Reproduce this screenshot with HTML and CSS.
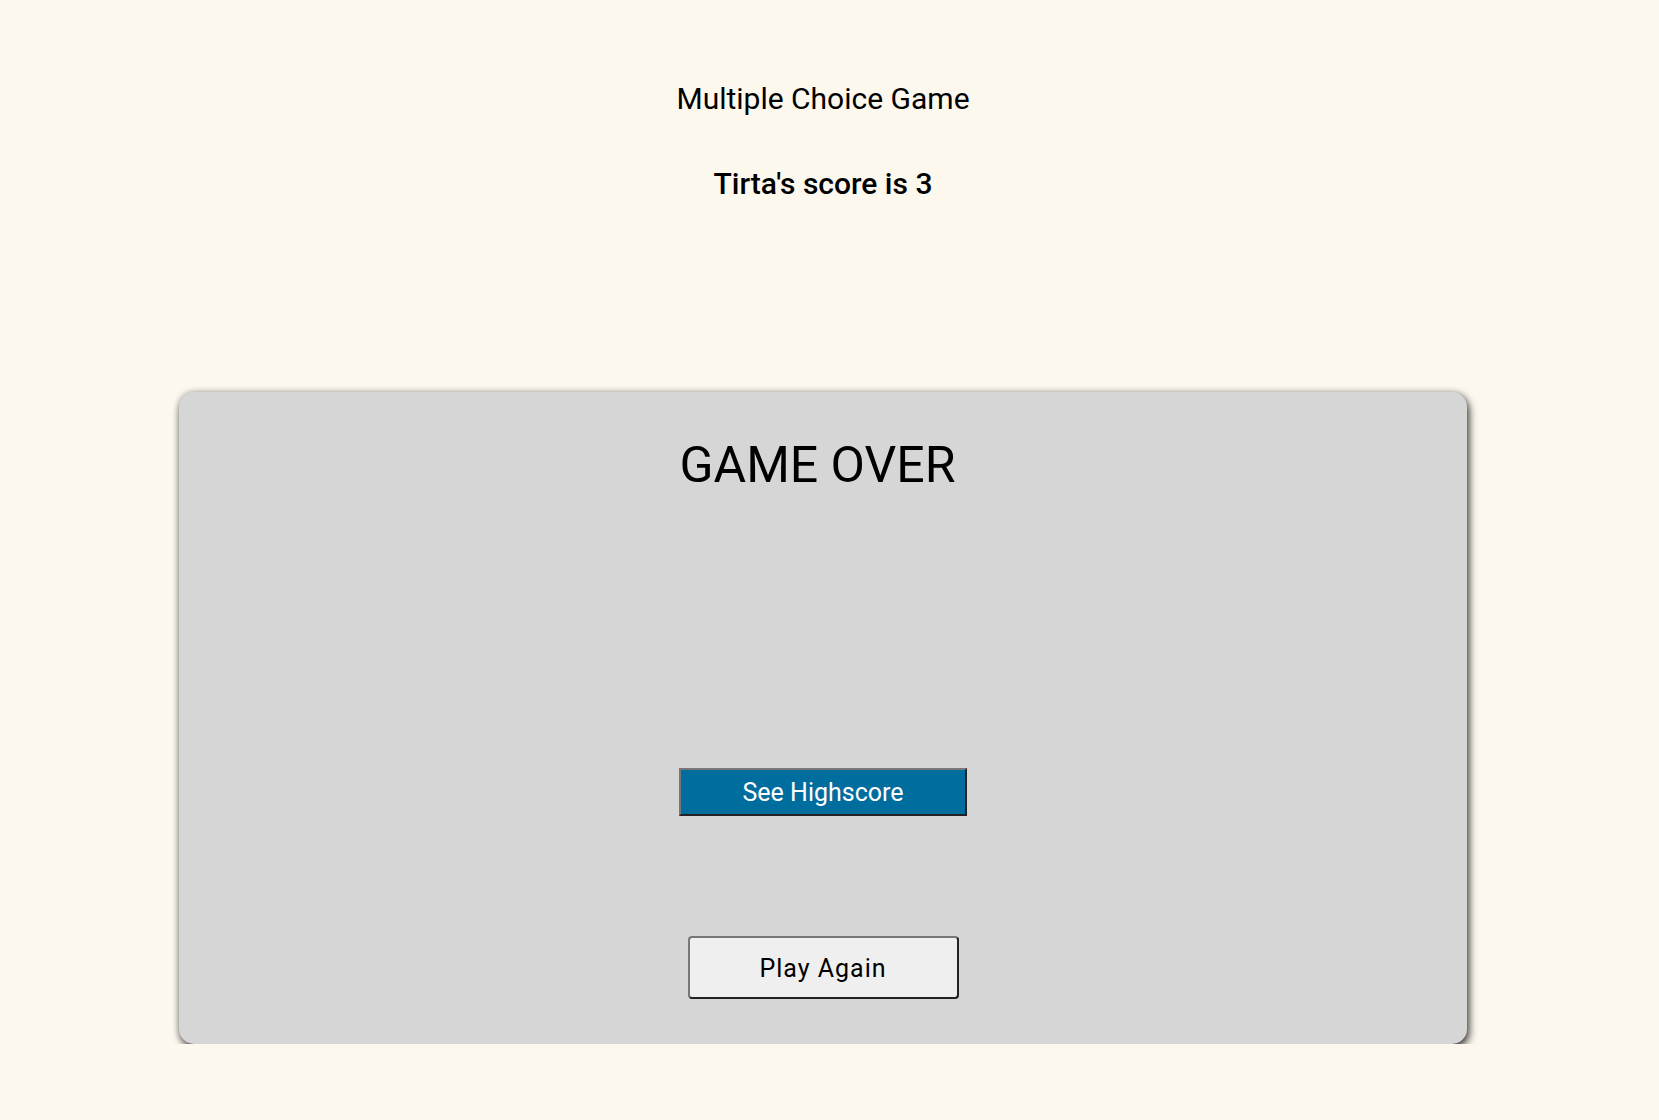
FILE: index.html
```html
<!DOCTYPE html>
<html lang="en">
<head>
<meta charset="utf-8">
<title>Multiple Choice Game</title>
<link rel="stylesheet" href="styles.css">
</head>
<body>
<div class="page">
  <header class="header">
    <h1 class="title">Multiple Choice Game</h1>
    <p class="score">Tirta's score is 3</p>
  </header>
  <main class="card">
    <h2 class="over">GAME OVER</h2>
    <button class="btn-high" type="button">See Highscore</button>
    <button class="btn-again" type="button">Play Again</button>
  </main>
</div>
</body>
</html>
```
FILE: styles.css
```css
html, body {
  margin: 0;
  padding: 0;
  background: #fcf8ee;
}
body {
  font-family: Roboto, "Liberation Sans", Arial, sans-serif;
  color: #000;
}
.page {
  width: 1646px;
  display: flex;
  flex-direction: column;
  align-items: center;
  padding-top: 81px;
}
.header {
  display: flex;
  flex-direction: column;
  align-items: center;
  gap: 49px;
}
.title {
  margin: 0;
  font-size: 30px;
  line-height: 36px;
  font-weight: 400;
}
.score {
  margin: 0;
  font-size: 30px;
  line-height: 36px;
  font-weight: 500;
}
.card {
  margin-top: 190px;
  width: 1288px;
  height: 652px;
  box-sizing: border-box;
  background: #d6d6d6;
  border-radius: 15px;
  box-shadow: 2px 4px 8px rgba(0, 0, 0, 0.75), 0 0 6px rgba(0, 0, 0, 0.2);
  display: flex;
  flex-direction: column;
  align-items: center;
  padding-top: 44px;
}
.over {
  margin: 0 11px 0 0;
  font-size: 50px;
  line-height: 58px;
  font-weight: 400;
}
.btn-high {
  margin-top: 274px;
  width: 288px;
  height: 48px;
  background: #006d9f;
  color: #fff;
  font-family: Roboto, "Liberation Sans", Arial, sans-serif;
  font-size: 25px;
  line-height: 30px;
  border: 2px solid;
  border-color: #777 #222 #222 #777;
  border-radius: 0;
  padding: 2px 0 0;
}
.btn-again {
  margin-top: 120px;
  width: 271px;
  height: 63px;
  background: #efefef;
  color: #000;
  font-family: Roboto, "Liberation Sans", Arial, sans-serif;
  font-size: 25px;
  letter-spacing: 1px;
  border: 2px solid;
  border-color: #777 #222 #222 #777;
  border-radius: 4px;
  padding: 2px 0 0;
}
```
